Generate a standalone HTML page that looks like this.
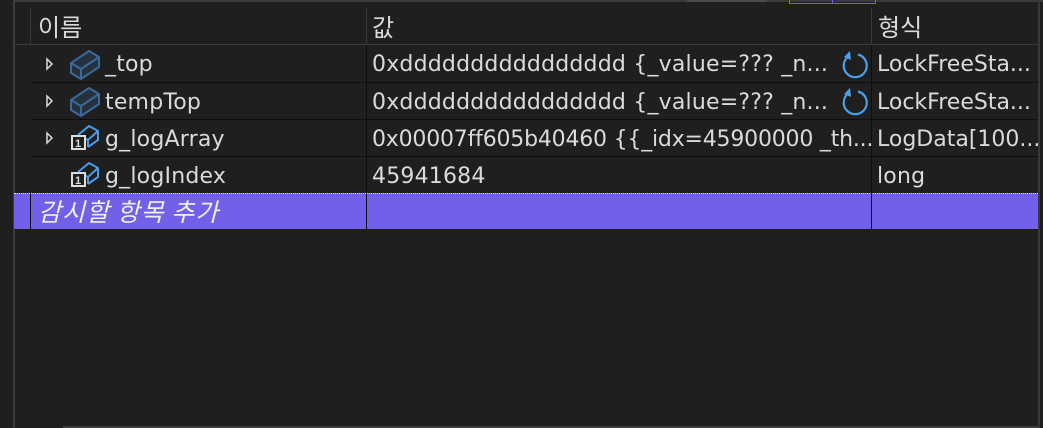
<!DOCTYPE html>
<html><head><meta charset="utf-8"><style>
*{margin:0;padding:0;box-sizing:border-box}
body{width:1043px;height:428px;background:#1f1f1f;position:relative;overflow:hidden;font-family:"DejaVu Sans","Noto Sans CJK KR",sans-serif;color:#dadada;font-size:22px;letter-spacing:0.2px}
.a{position:absolute}
.t{position:absolute;white-space:nowrap;line-height:37px}
.hl{position:absolute;height:1px;background:#0e0e0e}
.vl{position:absolute;width:1px;background:#0e0e0e}
.k{font-family:"Noto Sans CJK KR",sans-serif;letter-spacing:0}
</style></head><body>
<div class="a" style="left:13px;top:0;width:2px;height:428px;background:#3c3c3c"></div>
<div class="a" style="left:15px;top:0;width:1028px;height:2px;background:#3a3a3a"></div>
<div class="a" style="left:687px;top:0;width:80px;height:2px;background:#4a4a4a"></div>
<div class="a" style="left:789px;top:0;width:87px;height:4px;border:1px solid #7160e8;border-top:none"></div>
<div class="a" style="left:832px;top:0;width:1px;height:4px;background:#7160e8"></div>
<div class="a" style="left:1038px;top:0;width:2px;height:428px;background:#383838"></div>
<div class="a" style="left:63px;top:426px;width:975px;height:2px;background:#3e3e3e"></div>
<div class="a" style="left:15px;top:44px;width:1023px;height:1px;background:#3a3a3a"></div>
<div class="a" style="left:30px;top:8px;width:1px;height:36px;background:#3a3a3a"></div>
<div class="a" style="left:366px;top:8px;width:1px;height:36px;background:#3a3a3a"></div>
<div class="a" style="left:871px;top:8px;width:1px;height:36px;background:#3a3a3a"></div>
<div class="t k" style="left:38px;top:7px;font-size:24px">이름</div>
<div class="t k" style="left:372px;top:7px;font-size:24px">값</div>
<div class="t k" style="left:878px;top:7px;font-size:24px">형식</div>
<div class="hl" style="left:31px;top:82px;width:1007px"></div>
<div class="hl" style="left:31px;top:119px;width:1007px"></div>
<div class="hl" style="left:31px;top:156px;width:1007px"></div>
<div class="vl" style="left:366px;top:45px;height:148px"></div>
<div class="vl" style="left:871px;top:45px;height:148px"></div>
<svg class="a" style="left:0;top:0" width="1043" height="200">
<g fill="none" stroke="#dcdcdc" stroke-width="1.5">
<path d="M47 59 L52 64 L47 69Z"/><path d="M47 96 L52 101 L47 106Z"/><path d="M47 133 L52 138 L47 143Z"/>
</g>
<g fill="#26313d" stroke="#3a6a9a" stroke-width="2" stroke-linejoin="round">
<path d="M71 63 L89 51 L99 57 L99 67 L81 79 L71 73Z"/><path d="M71 63 L81 69 L99 57 M81 69 L81 79" fill="none"/>
<path d="M71 100 L89 88 L99 94 L99 104 L81 116 L71 110Z"/><path d="M71 100 L81 106 L99 94 M81 106 L81 116" fill="none"/>
</g>
<g fill="#1f1f1f" stroke="#4a9be8" stroke-width="2" stroke-linejoin="round">
<path d="M78 135 L89 126 L98 131 L98 140 L88 147"/><path d="M78 135 L88 140 L98 131 M88 140 L88 147" fill="none"/>
<path d="M78 172 L89 163 L98 168 L98 177 L88 184"/><path d="M78 172 L88 177 L98 168 M88 177 L88 184" fill="none"/>
</g>
<g fill="#1f1f1f" stroke="#dcdcdc" stroke-width="2">
<rect x="72" y="136" width="13" height="13"/><rect x="72" y="173" width="13" height="13"/>
</g>
<g fill="#dcdcdc" font-size="11" font-family="Liberation Sans" font-weight="bold"><text x="75" y="147">1</text><text x="75" y="184">1</text></g>
<g fill="none" stroke="#4aa0e8" stroke-width="2.2">
<path d="M858 54.5 A11.5 11.5 0 1 1 849 56"/><path d="M858 91.5 A11.5 11.5 0 1 1 849 93"/>
</g>
<g fill="#4aa0e8"><path d="M850 51 L851 60 L844 57Z"/><path d="M850 88 L851 97 L844 94Z"/></g>
</svg>
<div class="t" style="left:105px;top:46px">_top</div>
<div class="t" style="left:105px;top:84px">tempTop</div>
<div class="t" style="left:105px;top:121px">g_logArray</div>
<div class="t" style="left:105px;top:158px">g_logIndex</div>
<div class="t" style="left:372px;top:46px">0xdddddddddddddddd {_value=??? _n...</div>
<div class="t" style="left:372px;top:84px">0xdddddddddddddddd {_value=??? _n...</div>
<div class="t" style="left:372px;top:121px;letter-spacing:-0.2px">0x00007ff605b40460 {{_idx=45900000 _th...</div>
<div class="t" style="left:372px;top:158px">45941684</div>
<div class="t" style="left:877px;top:46px;letter-spacing:0">LockFreeSta...</div>
<div class="t" style="left:877px;top:84px;letter-spacing:0">LockFreeSta...</div>
<div class="t" style="left:877px;top:121px;letter-spacing:0">LogData[100...</div>
<div class="t" style="left:877px;top:158px">long</div>
<div class="a" style="left:14px;top:193px;width:1024px;height:37px;background:#7160e8;border-top:1px dotted #ddd;border-bottom:1px solid #1a1a1a"></div>
<div class="a" style="left:30px;top:193px;width:1px;height:37px;background:#111"></div>
<div class="a" style="left:366px;top:193px;width:1px;height:37px;background:#111"></div>
<div class="a" style="left:871px;top:193px;width:1px;height:37px;background:#111"></div>
<div class="t k" style="left:38px;top:193px;font-style:italic;color:#f0f0f0;font-size:25px;letter-spacing:1px">감시할 항목 추가</div>
</body></html>
